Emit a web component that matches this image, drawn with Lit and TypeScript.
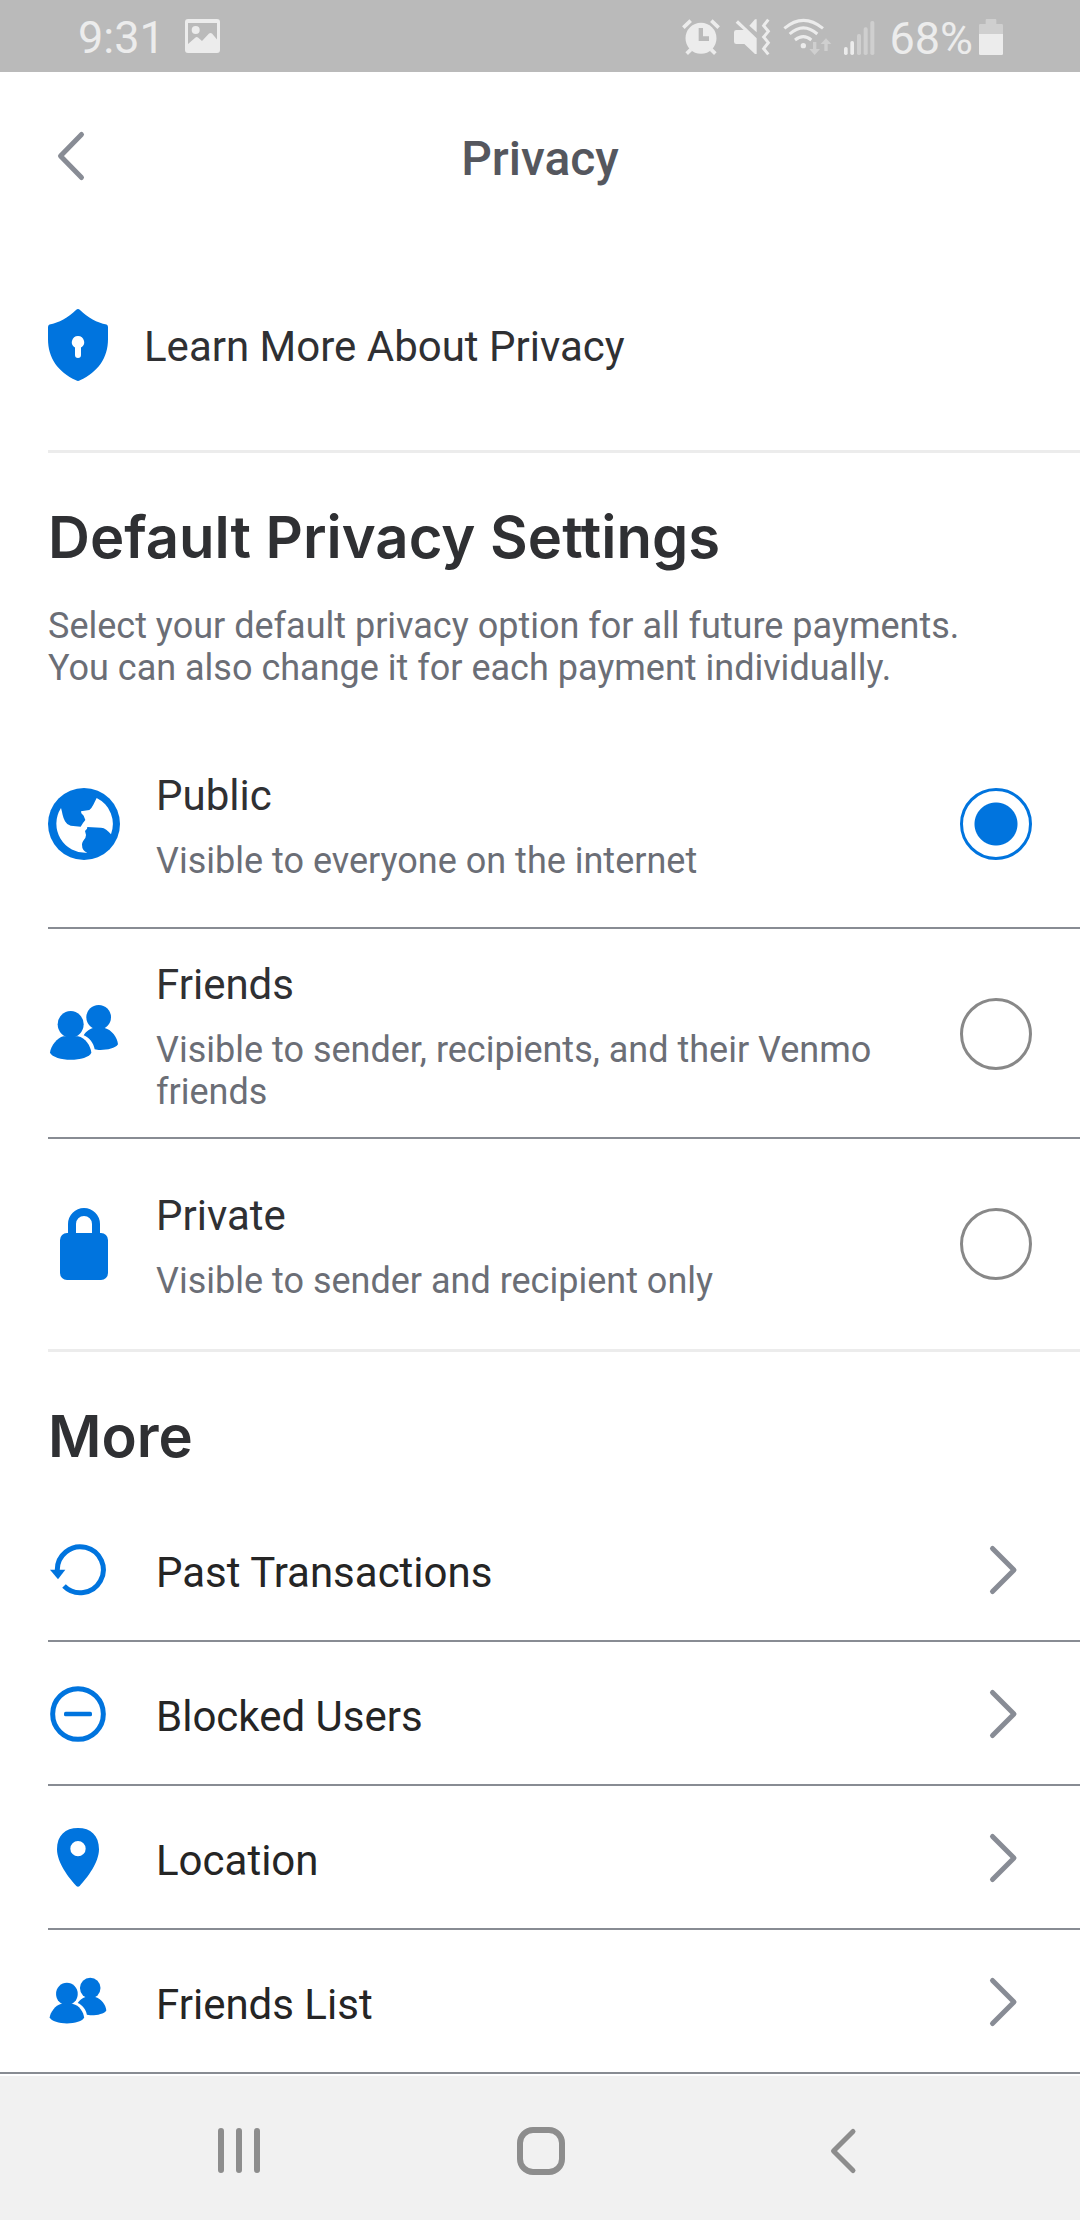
import { LitElement, html, css, svg } from "lit";
import { customElement, state } from "lit/decorators.js";

const friendsShape = svg`
  <ellipse cx="212" cy="853" rx="39" ry="40"/>
  <path d="M190 889C172 893 152 918 150 938C156 951 184 959 212 959C240 959 270 951 274 938C272 918 256 893 234 889Z"/>
  <circle cx="296" cy="832" r="37"/>
  <path d="M251 886C256 877 267 867 279 864H314C335 869 353 893 354 913C346 926 318 931 296 930L284 928C281 910 268 893 251 886Z"/>`;

const icons = {
  globe: html`<svg class="lg" viewBox="144 144 216 216" aria-hidden="true">
    <circle cx="252" cy="252" r="108"/>
    <path fill="#fff" d="M183 204C187 216 188 232 195 244Q200 254 212 257L242 260L249 249L256 240L251 227L244 220L243 214L268 210Q274 206 280 194L290 174A87 87 0 0 1 333 283C323 271 315 264 303 263L262 261L261 266L255 273L258 285L256 294C250 301 246 308 246 314Q246 332 262 338A87 87 0 0 1 183 204Z"/>
  </svg>`,
  friends: html`<svg class="lg" viewBox="144 774 216 216" aria-hidden="true">${friendsShape}</svg>`,
  friendsSmall: html`<svg class="md" viewBox="144 774 216 216" aria-hidden="true">${friendsShape}</svg>`,
  lock: html`<svg class="lg" viewBox="0 0 72 72" aria-hidden="true">
    <rect x="12" y="25" width="48" height="47" rx="7"/>
    <path d="M24 28V16a12 12 0 0 1 24 0V28" fill="none" stroke="currentColor" stroke-width="8"/>
  </svg>`,
  history: html`<svg class="md" viewBox="144 120 180 180" aria-hidden="true">
    <path d="M172 212A69 69 0 1 1 192 258" fill="none" stroke="currentColor" stroke-width="15"/>
    <path d="M150 209H196L174 238Z"/>
  </svg>`,
  blocked: html`<svg class="md" viewBox="144 552 180 180" aria-hidden="true">
    <circle cx="234" cy="642" r="76" fill="none" stroke="currentColor" stroke-width="15"/>
    <rect x="192" y="635" width="84" height="14" rx="5"/>
  </svg>`,
  location: html`<svg class="md" viewBox="144 84 180 180" aria-hidden="true">
    <path fill-rule="evenodd" d="M234 84C272 84 297 106 297 148C297 188 262 233 239 258Q234 262 229 258C206 233 171 188 171 148C171 106 196 84 234 84ZM234 123A23 23 0 1 0 234 169A23 23 0 1 0 234 123Z"/>
  </svg>`,
};

const options = [
  { id: "public", title: "Public", text: "Visible to everyone on the internet", icon: icons.globe },
  { id: "friends", title: "Friends", text: "Visible to sender, recipients, and their Venmo friends", icon: icons.friends },
  { id: "private", title: "Private", text: "Visible to sender and recipient only", icon: icons.lock },
];

const links = [
  { title: "Past Transactions", icon: icons.history },
  { title: "Blocked Users", icon: icons.blocked },
  { title: "Location", icon: icons.location },
  { title: "Friends List", icon: icons.friendsSmall },
];

@customElement("status-bar")
class StatusBar extends LitElement {
  static styles = css`
    :host {
      display: flex;
      align-items: center;
      height: 72px;
      padding: 0 77px 0 78px;
      box-sizing: border-box;
      background: #bababa;
      color: #ececec;
      font-size: 45px;
      line-height: 52px;
    }
    svg { display: block; fill: currentColor; flex: none; }
    .time { margin-right: 20px; }
    .status { display: flex; align-items: center; gap: 6px; margin-left: auto; padding-top: 2px; }
    .label { padding-top: 4px; }
    .dim { fill: #cfcfcf; }
    .line { fill: none; stroke: currentColor; }
  `;
  render() {
    return html`
      <span class="time label">9:31</span>
      <svg width="36" height="34" viewBox="0 0 36 34" aria-hidden="true">
        <path fill-rule="evenodd" d="M3 0H32Q35 0 35 3V31Q35 34 32 34H3Q0 34 0 31V3Q0 0 3 0ZM3 4V25L10.500 18.500Q11.700 17.500 13 18.500L17 22L24 14.500Q25.500 13.300 27 14.500L32 20.500V4Z"/>
        <circle cx="10.700" cy="11" r="4"/>
      </svg>
      <div class="status">
        <svg width="46" height="38" viewBox="120 54 138 114" aria-hidden="true">
          <path fill-rule="evenodd" d="M180 68A46 46 0 1 0 180 161A46 46 0 1 0 180 68ZM173 84H186V109H204V123H173Z"/>
          <path class="line" stroke-width="11" d="M127 83L149 62M233 83L211 62M137 161L150 148M223 161L210 148"/>
        </svg>
        <svg width="44" height="38" viewBox="276 54 132 114" aria-hidden="true">
          <path d="M308 90L284 68L291 61L347 115V162H342L310 132H286Q279 132 279 125V97Q279 90 286 90ZM325 77L342 58H347V97Z"/>
          <path class="line" stroke-width="9" d="M382 59L368 77L382 94L368 111L382 128L368 146L382 163"/>
        </svg>
        <svg width="54" height="38" viewBox="426 54 162 114" aria-hidden="true">
          <path class="line" stroke-width="9" d="M430 85Q487 37 546 85M446 102Q487 65 529 102M462 120Q487 100 511 120"/>
          <circle cx="487" cy="137" r="8"/>
          <path class="dim" d="M516 126H526V147H537L521 165L505 147H516ZM550 153H560V132H571L555 115L539 132H550Z"/>
        </svg>
        <svg width="40" height="38" viewBox="606 54 120 114" aria-hidden="true">
          <rect x="609" y="141" width="11" height="24" rx="5"/>
          <rect x="628" y="123" width="11" height="42" rx="5"/>
          <rect class="dim" x="648" y="102" width="12" height="63" rx="5"/>
          <rect class="dim" x="668" y="82" width="12" height="83" rx="5"/>
          <rect class="dim" x="688" y="63" width="12" height="102" rx="5"/>
        </svg>
        <span class="label">68%</span>
        <svg width="24" height="38" viewBox="1014 54 72 114" aria-hidden="true">
          <path class="dim" d="M1034 60Q1034 57 1037 57H1063Q1066 57 1066 60V72H1082Q1086 72 1086 76V102H1014V76Q1014 72 1018 72H1034Z"/>
          <path d="M1014 102H1086V161Q1086 165 1082 165H1018Q1014 165 1014 161Z"/>
        </svg>
      </div>
    `;
  }
}

@customElement("app-root")
class AppRoot extends LitElement {
  @state() selected = "public";

  static styles = css`
    :host {
      display: flex;
      flex-direction: column;
      min-height: 100vh;
      background: #fff;
      color: #2f3033;
      font-family: Roboto, "Liberation Sans", sans-serif;
      font-size: 42px;
      line-height: 48px;
    }
    h1, h2, p, ul, fieldset { margin: 0; padding: 0; border: 0; min-width: 0; }
    ul { list-style: none; }
    a { color: inherit; text-decoration: none; }
    button { border: 0; padding: 0; background: none; color: inherit; font: inherit; }
    svg { display: block; fill: currentColor; flex: none; }
    .lg { width: 72px; height: 72px; color: #0074de; }
    .md { width: 60px; height: 60px; color: #0074de; }
    .stroke { fill: none; stroke: currentColor; stroke-linecap: round; stroke-linejoin: round; }

    .header {
      display: grid;
      grid-template-columns: 108px 1fr 108px;
      align-items: center;
      height: 168px;
    }
    .back { padding-left: 54px; color: #888c95; }
    .title {
      padding-top: 6px;
      text-align: center;
      font-size: 48px;
      line-height: 56px;
      font-weight: 500;
      color: #55575e;
    }
    .learn {
      display: flex;
      align-items: center;
      gap: 36px;
      height: 210px;
      margin-left: 48px;
      border-bottom: 3px solid #ececec;
    }
    .learn span { padding-top: 4px; }
    .shield { color: #0074de; }

    .heading {
      padding: 48px 48px 0;
      font-family: Inter, Roboto, sans-serif;
      font-size: 58px;
      line-height: 72px;
      font-weight: 600;
    }
    .intro { padding: 32px 96px 30px 48px; }
    .note { font-size: 36px; line-height: 42px; color: #6b6e76; }

    .option {
      display: flex;
      align-items: center;
      gap: 36px;
      box-sizing: border-box;
      min-height: 210px;
      margin-left: 48px;
      padding: 2px 48px 0 0;
      border-bottom: 2px solid #888c93;
    }
    .option:last-child { padding-bottom: 2px; border-bottom: 3px solid #ececec; min-height: 213px; }
    .words { display: flex; flex-direction: column; gap: 20px; flex: 1; padding-top: 6px; }
    .radio {
      appearance: none;
      flex: none;
      width: 72px;
      height: 72px;
      margin: 0;
      border: 3px solid #888;
      border-radius: 50%;
    }
    .radio:checked {
      border-color: #0074de;
      background: radial-gradient(circle, #0074de 21px, transparent 22px);
    }

    .more { padding-bottom: 26px; }
    .item { margin-left: 48px; border-bottom: 2px solid #888c93; }
    .item:last-child { margin-left: 0; padding-left: 48px; }
    .link {
      display: flex;
      align-items: center;
      gap: 48px;
      height: 142px;
      padding: 2px 60px 0 0;
      box-sizing: border-box;
      color: #252525;
    }
    .link span { flex: 1; padding-top: 6px; }
    .chevron { color: #888c95; }

    .nav {
      display: grid;
      grid-template-columns: repeat(3, 1fr);
      height: 144px;
      margin-top: auto;
      padding: 6px 86px 0 88px;
      box-sizing: border-box;
      background: #f1f1f1;
      color: #8d8d8d;
    }
    .nav button { display: flex; align-items: center; justify-content: center; }
  `;

  render() {
    return html`
      <status-bar></status-bar>
      <header class="header">
        <button class="back" aria-label="Back">
          <svg class="stroke" width="34" height="54" viewBox="0 0 34 54" stroke-width="5"><path d="M27.500 5.500L6.500 27L27.500 48.500"/></svg>
        </button>
        <h1 class="title">Privacy</h1>
      </header>
      <a class="learn" href="#learn">
        <svg class="shield" width="60" height="72" viewBox="0 0 60 72" aria-hidden="true">
          <path fill-rule="evenodd" d="M28 1Q30 -1 32 1C40 9 49 13.500 58.500 15.500Q60 16 60 18V30C60 49 50 63 32 71.300Q30 72.500 28 71.300C10 63 0 49 0 30V18Q0 16 1.500 15.500C11 13.500 20 9 28 1ZM30 27A6.200 6.200 0 0 0 27 38.600V46A3 3 0 0 0 33 46V38.600A6.200 6.200 0 0 0 30 27Z"/>
        </svg>
        <span>Learn More About Privacy</span>
      </a>
      <main>
        <section>
          <h2 class="heading">Default Privacy Settings</h2>
          <p class="intro note">Select your default privacy option for all future payments. You can also change it for each payment individually.</p>
          <fieldset aria-label="Default privacy">
            ${options.map(o => html`
              <label class="option" for=${o.id}>
                ${o.icon}
                <span class="words">
                  <span>${o.title}</span>
                  <span class="note">${o.text}</span>
                </span>
                <input class="radio" type="radio" name="privacy" id=${o.id}
                  .checked=${this.selected === o.id} @change=${() => (this.selected = o.id)}>
              </label>`)}
          </fieldset>
        </section>
        <section>
          <h2 class="heading more">More</h2>
          <ul>
            ${links.map(l => html`
              <li class="item">
                <a class="link" href="#more">
                  ${l.icon}
                  <span>${l.title}</span>
                  <svg class="chevron stroke" width="34" height="54" viewBox="0 0 34 54" stroke-width="5" aria-hidden="true"><path d="M6.500 5.500L28 27L6.500 48.500"/></svg>
                </a>
              </li>`)}
          </ul>
        </section>
      </main>
      <nav class="nav" aria-label="System">
        <button aria-label="Recent apps">
          <svg width="42" height="46" viewBox="0 0 42 46"><path d="M0 3a3 3 0 0 1 6 0V42a3 3 0 0 1-6 0ZM18 3a3 3 0 0 1 6 0V42a3 3 0 0 1-6 0ZM36 3a3 3 0 0 1 6 0V42a3 3 0 0 1-6 0Z"/></svg>
        </button>
        <button aria-label="Home">
          <svg class="stroke" width="48" height="48" viewBox="0 0 48 48" stroke-width="6"><rect x="3" y="3" width="42" height="42" rx="13"/></svg>
        </button>
        <button aria-label="Go back">
          <svg class="stroke" width="28" height="48" viewBox="0 0 28 48" stroke-width="5"><path d="M24 4.500L4.500 24L24 43.500"/></svg>
        </button>
      </nav>
    `;
  }
}
